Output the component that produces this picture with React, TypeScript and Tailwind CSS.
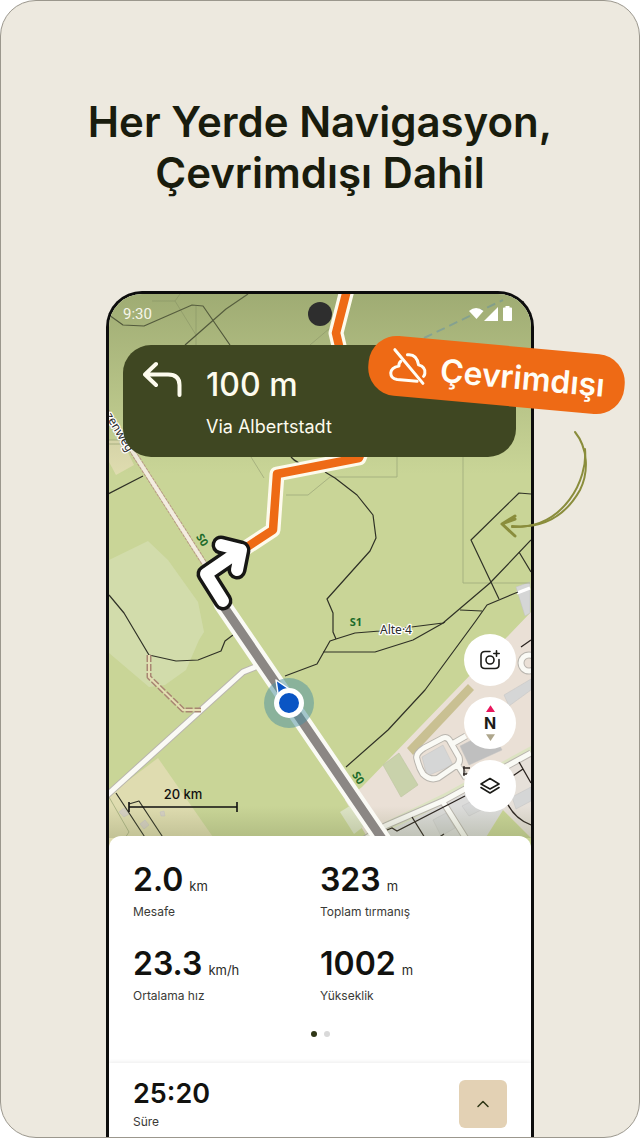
import { ChevronUp } from "lucide-react";

type Stat = { value: string; unit: string; label: string };

const stats: Stat[] = [
  { value: "2.0", unit: "km", label: "Mesafe" },
  { value: "323", unit: "m", label: "Toplam tırmanış" },
  { value: "23.3", unit: "km/h", label: "Ortalama hız" },
  { value: "1002", unit: "m", label: "Yükseklik" },
];

function MapCanvas() {
  return (
    <svg
      className="absolute inset-0 size-full"
      viewBox="109 294 422 556"
      preserveAspectRatio="xMidYMin slice"
      aria-hidden="true"
    >
      <defs>
        <linearGradient id="shade" x1="0" y1="0" x2="0" y2="1">
          <stop offset="0" stopColor="#7d8a56" stopOpacity="0.55" />
          <stop offset="1" stopColor="#7d8a56" stopOpacity="0" />
        </linearGradient>
        <linearGradient id="foot" x1="0" y1="0" x2="0" y2="1">
          <stop offset="0" stopColor="#6b7548" stopOpacity="0" />
          <stop offset="1" stopColor="#6b7548" stopOpacity="0.25" />
        </linearGradient>
      </defs>
      <rect x="109" y="294" width="422" height="556" fill="#c9d597" />

      {/* land use */}
      <path d="M109 560 148 541 168 560 198 602 204 632 199 640 186 670 165 685 149 687 109 653Z" fill="#d2dcab" />
      <path d="M109 795 158 758 222 850H109Z" fill="#dfdcb0" />
      <path d="M109 440 122 440 134 465 116 475 109 462Z" fill="#dfdcb0" />
      <path d="M531 612 507 637 362 787 345 800 375 850H531Z" fill="#eae0d6" />
      <path d="M340 812 353 804 368 823 354 834Z" fill="#dde4c6" />
      <path d="M385 822 445 793 531 746V756L445 803 388 832Z" fill="#dce3c2" />
      <path d="M385 832 445 804 500 775 503 810 478 850H380Z" fill="#dcdcdb" />
      <path d="M503 809 531 837 531 753 495 772Z" fill="#e6e0d9" />
      <path d="M503 810 531 838V850H478Z" fill="#c9d597" />
      <path d="M468 684 474 690 413 755 407 748Z" fill="#c9c092" />
      <path d="M383 765 399 753 418 785 401 797Z" fill="#c9d2ab" stroke="#bcc59f" strokeWidth="0.6" />

      {/* buildings */}
      <g fill="#d5d6d6" stroke="#c3c3c3" strokeWidth="0.5">
        <path d="M516 587 530 582V613L525 616Z" />
        <path d="M504 695 531 679V690L509 706Z" />
        <path d="M512 797 531 787V801L516 809Z" />
        <path d="M422 757 443 745 453 765 427 776Z" />
        <path d="M460 746 492 730 502 750 469 765Z" fill="#bfbfbf" />
        <path d="M462 806 476 799 483 809 469 816Z" />
        <path d="M433 820 446 813 455 828 441 836Z" />
        <path d="M119 812 124 808 129 814 124 817Z M140 824 145 820 149 825 144 829Z M160 812 164 811 165 816 161 816Z" fill="#d6d0c4" />
      </g>
      <path d="M517 593 530 588" stroke="#fff" strokeWidth="3" />

      {/* thin boundaries */}
      <g fill="none" stroke="#9fa97b" strokeWidth="0.8">
        <path d="M152 301H175L196 335V345M175 301 180 294M196 335V305M310 345 330 328" />
        <path d="M251 457 264 478M286 495H308L330 477H397V457M463 457V583H530" />
        <path d="M109 797 129 832 125 838M109 440H122M109 444H122" />
      </g>

      {/* footpaths */}
      <g fill="none" stroke="#2f3126" strokeWidth="1.2" strokeLinejoin="round">
        <path d="M109 315 123 325 144 326 192 305 203 306 230 345" />
        <path d="M248 294 226 309 185 345" />
        <path d="M108 494 143 476M109 595 124 613 149 655 176 661 198 660 221 651 225 641 233 635" />
        <path d="M285 676 317 664 330 641 336 639 355 633 380 631 443 623 490 583 531 540" />
        <path d="M291 457Q297 464 306 464M325 472 335 478 357 495 373 515 376 538 370 551 327 599 333 613 333 632 336 639" />
        <path d="M323 652H375L413 640 445 622M460 610 482 611M519 552 531 572" />
        <path d="M531 494 519 493 471 540 499 599M518 592 487 605 475 622 425 690 388 730 346 767" />
        <path d="M116 793 150 845M129 804 139 801 168 845" />
      </g>

      {/* streets */}
      <g fill="none" strokeLinejoin="round">
        <g stroke="#b9b5ae" strokeWidth="7">
          <path d="M105 797 243 672 258 666" />
          <path d="M360 842 385 826 445 800 531 753M443 802 470 845" />
          <path d="M417 759Q415 754 424 748L443 738Q448 736 451 743L459 757Q461 764 454 767L438 778Q430 781 423 774Q419 768 417 759ZM452 744 466 736M457 764 466 778" />
          <circle cx="529" cy="663" r="8" />
        </g>
        <g stroke="#fafaf5" strokeWidth="5">
          <path d="M105 797 243 672 258 666" />
          <path d="M360 842 385 826 445 800 531 753M443 802 470 845" />
          <path d="M417 759Q415 754 424 748L443 738Q448 736 451 743L459 757Q461 764 454 767L438 778Q430 781 423 774Q419 768 417 759ZM452 744 466 736M457 764 466 778" />
          <circle cx="529" cy="663" r="8" />
        </g>
        <path d="M103 405 206 566" stroke="#b79a83" strokeWidth="6" strokeDasharray="3 1" />
        <path d="M103 405 206 566" stroke="#f3ece0" strokeWidth="4" />
        <path d="M149 655V677L183 710H201" stroke="#a88672" strokeWidth="5" strokeDasharray="7 2" />
        <path d="M149 655V677L183 710H201" stroke="#e6dfb4" strokeWidth="2" />
      </g>
      <g fill="none" stroke="#2b2420" strokeWidth="1.3">
        <path d="M387 830 392 828 397 831 465 796M412 817 425 838M504 782 523 769M519 762 531 783M507 803Q515 819 531 825M521 647 531 640M438 838 444 834" />
        <path d="M463 768H470M463 774H470M464 766V776" />
      </g>
      <path d="M424 338 503 300" stroke="#8bb5c0" strokeWidth="2" strokeDasharray="9 5" fill="none" />

      <rect x="109" y="294" width="422" height="180" fill="url(#shade)" />
      <rect x="109" y="806" width="422" height="32" fill="url(#foot)" />

      {/* route */}
      <g fill="none" strokeLinejoin="round" strokeLinecap="round">
        <path d="M347 290 336 333 340 350 366 440 359 458 277 474 273 530 244 549" stroke="#fdfaec" strokeWidth="15" />
        <path d="M347 290 336 333 340 350 366 440 359 458 277 474 273 530 244 549" stroke="#ee6a15" strokeWidth="8.5" />
        <path d="M222 604 385 843" stroke="#fafaf5" strokeWidth="17" />
        <path d="M222 604 385 843" stroke="#8b8784" strokeWidth="9" />
      </g>

      {/* turn arrow */}
      <g fill="none" strokeLinejoin="round" strokeLinecap="round">
        <path d="M223 601 206 574 241 550M221 545 241 550 237 570" stroke="#171715" strokeWidth="19" />
        <path d="M223 601 206 574 241 550M221 545 241 550 237 570" stroke="#fff" strokeWidth="12" />
      </g>

      {/* current position */}
      <circle cx="289" cy="703" r="25" fill="#4b8f9f" fillOpacity="0.5" />
      <path d="M276 680 295 693 279 700Z" fill="#0a55c4" stroke="#fff" strokeWidth="1.5" strokeLinejoin="round" />
      <circle cx="289" cy="703" r="12.5" fill="#0a55c4" stroke="#fff" strokeWidth="5" />

      {/* map labels */}
      <g fontFamily="'Noto Sans', sans-serif" fontSize="11" textAnchor="middle">
        <g fill="#1c6b2a" fontWeight="700">
          <text transform="translate(199 542) rotate(57)">S0</text>
          <text transform="translate(355 780) rotate(57)">S0</text>
          <text x="356" y="626">S1</text>
        </g>
        <g fill="#2b2b2b" stroke="#fff" strokeWidth="2.5" paintOrder="stroke" strokeLinejoin="round" fontSize="12">
          <text x="396" y="634">Alte·4</text>
          <text transform="translate(116 434) rotate(59)">zenweg</text>
        </g>
      </g>
      <circle cx="320" cy="314" r="12" fill="#2e2e2e" />
    </svg>
  );
}

function StatusBar() {
  return (
    <div className="relative flex h-[51px] items-start justify-between pt-3 pr-1 font-[Roboto,sans-serif]">
      <span className="text-[15px] leading-4 text-[#f6f6ea]">9:30</span>
      <svg className="h-4 w-[43px]" viewBox="470 306 43 16" fill="#fff" aria-hidden="true">
        <path d="M470 311Q477 305 484.500 311L477.500 319Z" />
        <path d="M485 321 499 307V321Z" />
        <path d="M504 308.500Q504 307.500 505 307.500H506.500V306H510.500V307.500H512Q513 307.500 513 308.500V320Q513 321 512 321H505Q504 321 504 320Z" />
      </svg>
    </div>
  );
}

function DirectionBanner() {
  return (
    <div className="relative flex h-28 gap-6 rounded-[28px] bg-[#3f4722] pt-4 pl-5 text-[#fdfbee]">
      <svg className="h-9 w-[39px] shrink-0" viewBox="0 0 39 36" fill="none" stroke="currentColor" strokeWidth="4" strokeLinecap="round" strokeLinejoin="round" aria-hidden="true">
        <path d="M13 3 2 13.500 13 24M2.500 13.500H25Q36.500 13.500 36.500 24V34" />
      </svg>
      <div className="pt-1">
        <p className="text-[32px] leading-10 font-medium">100 m</p>
        <p className="mt-2.5 text-lg leading-6">Via Albertstadt</p>
      </div>
    </div>
  );
}

function MapControls() {
  const round = "flex size-[52px] items-center justify-center rounded-full bg-white text-[#1c1c18]";
  return (
    <div className="flex flex-col gap-[11px]">
      <button type="button" aria-label="Fotoğraf ekle" className={round}>
        <svg className="size-5" viewBox="0 0 20 20" fill="none" stroke="currentColor" strokeWidth="1.6" strokeLinecap="round" aria-hidden="true">
          <path d="M10 1.500H5Q1 1.500 1 5.500V14.500Q1 18.500 5 18.500H15Q19 18.500 19 14.500V9.500" />
          <circle cx="10" cy="10" r="4" />
          <path d="M16.500 .8V6.200M13.800 3.500H19.200" />
        </svg>
      </button>
      <button type="button" aria-label="Kuzeye hizala" className={`${round} flex-col`}>
        <svg className="h-[7px] w-[9px]" viewBox="0 0 8 6" fill="#e8175d" aria-hidden="true"><path d="M4 0 8 6H0Z" /></svg>
        <span className="my-px text-base leading-5 font-bold">N</span>
        <svg className="h-[7px] w-[9px]" viewBox="0 0 8 6" fill="#aea68c" aria-hidden="true"><path d="M4 6 0 0H8Z" /></svg>
      </button>
      <button type="button" aria-label="Katmanlar" className={round}>
        <svg className="size-5" viewBox="0 0 20 20" fill="none" stroke="currentColor" strokeWidth="1.6" strokeLinejoin="round" strokeLinecap="round" aria-hidden="true">
          <path d="M10 2.500 19 8 10 13 1 8Z" />
          <path d="M1 11.500 10 17 19 11.500" />
        </svg>
      </button>
    </div>
  );
}

function OfflineBadge() {
  return (
    <div className="absolute top-[54px] -right-[91px] flex h-[60px] w-[257px] rotate-[5.2deg] items-center gap-3 rounded-[28px] bg-[#ee6a15] pl-5 text-[#fffdf5]">
      <svg className="size-10 shrink-0" viewBox="0 0 40 40" fill="none" stroke="currentColor" strokeWidth="3" strokeLinecap="round" strokeLinejoin="round" aria-hidden="true">
        <path d="M5 4 36 35" />
        <path d="M12 15Q10 17 10.500 20Q3 22 3 27.500Q3.500 33 10 33.500H30" />
        <path d="M18 8Q27 6 30 17Q37.500 18.500 37 25Q37 26.500 36 28" />
      </svg>
      <span className="pt-0.5 text-[32px] leading-10 font-semibold">Çevrimdışı</span>
    </div>
  );
}

function StatItem({ stat }: { stat: Stat }) {
  return (
    <div className="flex flex-col-reverse gap-0.5">
      <dt className="text-xs leading-5 text-[#3a3a36]">{stat.label}</dt>
      <dd className="flex items-baseline gap-1.5">
        <span className="text-[32px] leading-10 font-semibold text-[#12120f]">{stat.value}</span>
        <span className="text-[13px] leading-5 text-[#2c2c28]">{stat.unit}</span>
      </dd>
    </div>
  );
}

function StatsSheet() {
  return (
    <div className="relative -mt-3.5 flex flex-1 flex-col overflow-hidden rounded-t-xl bg-white">
      <dl className="grid grid-cols-2 gap-y-[22px] px-6 pt-6">
        {stats.map((stat) => (
          <StatItem key={stat.label} stat={stat} />
        ))}
      </dl>
      <div className="mt-[25px] flex justify-center gap-[7px]">
        <span className="size-1.5 rounded-full bg-[#2f3616]" />
        <span className="size-1.5 rounded-full bg-[#d9d9d9]" />
      </div>
      <div className="mt-[26px] flex flex-1 items-start justify-between px-6 pt-[17px] shadow-[0_-1px_4px_rgba(0,0,0,0.08)]">
        <div>
          <p className="text-[27px] leading-7 font-semibold text-[#12120f]">25:20</p>
          <p className="mt-1 text-xs leading-5 text-[#3a3a36]">Süre</p>
        </div>
        <button type="button" aria-label="Genişlet" className="flex size-12 items-center justify-center rounded-md bg-[#e3d1b4] text-[#2f3616]">
          <ChevronUp className="size-5" strokeWidth={1.8} />
        </button>
      </div>
    </div>
  );
}

export default function App() {
  return (
    <div className="min-h-screen bg-white font-[Inter,sans-serif]">
      <main className="flex min-h-screen flex-col overflow-hidden rounded-[36px] border border-[#9b978d] bg-[#ede9df]">
        <h1 className="pt-[95px] text-center text-[42px] leading-[51px] font-semibold text-[#191c0d]">
          Her Yerde Navigasyon,
          <br />
          Çevrimdışı Dahil
        </h1>

        {/* Phone */}
        <div className="relative mx-auto mt-[93px] flex w-full max-w-[428px] flex-1 flex-col">
          <div className="flex flex-1 flex-col overflow-hidden rounded-t-[36px] border-x-[3px] border-t-[3px] border-[#0d0d0d] bg-white">
            <section className="relative pr-[15px] pb-[38px] pl-3.5">
              <MapCanvas />
              <StatusBar />
              <DirectionBanner />
              <div className="relative mt-[177px] flex items-end justify-between">
                <div className="ml-[5px] w-[110px] text-center text-[#111]">
                  <p className="text-[13px] leading-4 font-medium">20 km</p>
                  <svg className="block h-[10px] w-full" viewBox="0 0 110 10" stroke="currentColor" strokeWidth="1.6" aria-hidden="true">
                    <path d="M1 0V10M109 0V10M1 5H109" />
                  </svg>
                </div>
                <MapControls />
              </div>
            </section>
            <StatsSheet />
          </div>

          <OfflineBadge />

          {/* hand-drawn pointer from the badge to the map */}
          <svg className="absolute top-[137px] -right-[58px] h-[116px] w-24" viewBox="496 428 96 116" fill="none" stroke="#8a8d3c" strokeLinecap="round" aria-hidden="true">
            <path d="M575 432C588 448 589 472 580 490C566 515 545 529 512 526" strokeWidth="2" />
            <path d="M585 449C588 478 565 529 512 527" strokeWidth="2" />
            <path d="M515 516 502 524 515 536M504 523 515 519" strokeWidth="3" strokeLinejoin="round" />
          </svg>
        </div>
      </main>
    </div>
  );
}
